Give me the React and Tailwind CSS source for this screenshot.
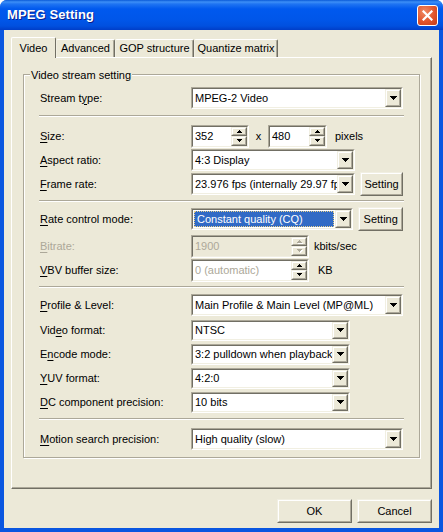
import React from 'react';

// tiny pixel arrows, drawn on a 1px grid so they stay crisp
const DropArrow = () => (
  <svg width="7" height="4" viewBox="0 0 7 4" shapeRendering="crispEdges">
    <path fill="#000" d="M0 0h7v1H6v1H5v1H4v1H3V3H2V2H1V1H0z" />
  </svg>
);

const SpinUp = ({ color = '#000' }) => (
  <svg width="5" height="3" viewBox="0 0 5 3" shapeRendering="crispEdges">
    <path fill={color} d="M2 0h1v1h1v1h1v1H0V2h1V1h1z" />
  </svg>
);

const SpinDown = ({ color = '#000' }) => (
  <svg width="5" height="3" viewBox="0 0 5 3" shapeRendering="crispEdges">
    <path fill={color} d="M0 0h5v1H4v1H3v1H2V2H1V1H0z" />
  </svg>
);

function Raised({ className = '', children }) {
  return (
    <div className={`flex border border-[#f1efe2] border-b-[#716f64] border-r-[#716f64] ${className}`}>
      <div className="flex-1 flex items-center justify-center border border-white border-b-[#aca899] border-r-[#aca899] bg-[#ece9d8]">
        {children}
      </div>
    </div>
  );
}

function Sunken({ className = '', inner = 'bg-white', children }) {
  return (
    <div className={`flex border border-[#aca899] border-b-white border-r-white ${className}`}>
      <div className={`flex-1 flex min-w-0 border border-[#716f64] border-b-[#f1efe2] border-r-[#f1efe2] ${inner}`}>
        {children}
      </div>
    </div>
  );
}

function Combo({ w, h = 'h-[22px]', value, selected }) {
  return (
    <Sunken className={`${w} ${h}`}>
      {selected ? (
        <div className="flex-1 min-w-0 flex items-center m-px pl-[2px] bg-[#316ac5] text-white whitespace-nowrap overflow-hidden border border-dotted border-[#e8d08a]">
          {value}
        </div>
      ) : (
        <div className="flex-1 min-w-0 flex items-center pl-[2px] whitespace-nowrap overflow-hidden">{value}</div>
      )}
      <Raised className="w-[16px]"><DropArrow /></Raised>
    </Sunken>
  );
}

function Spin({ w, value, disabled, dimText }) {
  const arrow = disabled ? '#aca899' : '#000';
  return (
    <Sunken className={`${w} h-[23px]`} inner={disabled ? 'bg-[#ece9d8]' : 'bg-white'}>
      <div className={`flex-1 min-w-0 flex items-center pl-[2px] whitespace-nowrap ${disabled || dimText ? 'text-[#aca899]' : ''}`}>
        {value}
      </div>
      <div className="w-[16px] flex flex-col">
        <Raised className="flex-1">
          <span className={disabled ? 'flex drop-shadow-[1px_1px_0_#fff]' : 'flex'}><SpinUp color={arrow} /></span>
        </Raised>
        <Raised className="flex-1">
          <span className={disabled ? 'flex drop-shadow-[1px_1px_0_#fff]' : 'flex'}><SpinDown color={arrow} /></span>
        </Raised>
      </div>
    </Sunken>
  );
}

function Btn({ w, h = 'h-[24px]', children }) {
  return <Raised className={`${w} ${h}`}>{children}</Raised>;
}

// label with underlined access key
function Lbl({ pre = '', u, post = '', disabled }) {
  return (
    <div className={`w-[151px] shrink-0 whitespace-nowrap ${disabled ? 'text-[#aca899]' : ''}`}>
      {pre}<span className="underline underline-offset-[2px]">{u}</span>{post}
    </div>
  );
}

function Row({ className = '', children }) {
  return <div className={`flex items-center h-[24px] ${className}`}>{children}</div>;
}

const Sep = ({ className = '' }) => (
  <div className={`border-t border-[#aca899] border-b border-b-white ${className}`} />
);

const TABS = [
  { label: 'Video', w: 'w-[45px]', active: true },
  { label: 'Advanced', w: 'w-[59px]' },
  { label: 'GOP structure', w: 'w-[79px]' },
  { label: 'Quantize matrix', w: 'w-[84px]' },
];

export default function App() {
  return (
    <div className="w-[443px] h-[532px] flex flex-col rounded-t-[7px] overflow-hidden bg-[#0a56e0] font-['Liberation_Sans',Arial,sans-serif] text-[11px] text-black">

      {/* Title bar */}
      <div className="h-[30px] shrink-0 flex items-center pl-[7px] pr-[5px] bg-[linear-gradient(to_bottom,#0a5ad8_0px,#3d8ff7_2px,#1f74f2_4px,#0059ee_9px,#0056e9_20px,#0050df_26px,#003ec8_30px)]">
        <span className="text-white font-bold text-[13px] tracking-[0.1px] [text-shadow:1px_1px_0_#0a1e8a]">MPEG Setting</span>
        <div className="ml-auto w-[21px] h-[21px] rounded-[3px] border border-white flex items-center justify-center bg-[radial-gradient(circle_at_35%_30%,#f08a63,#e0542c_55%,#c23b18)]">
          <svg width="11" height="11" viewBox="0 0 11 11">
            <path d="M1.5 1.5l8 8M9.5 1.5l-8 8" stroke="#fff" strokeWidth="2.2" strokeLinecap="square" />
          </svg>
        </div>
      </div>

      {/* Client area */}
      <div className="flex-1 mx-[4px] mb-[4px] bg-[#ece9d8] px-[7px] pt-[7px] pb-[5px] flex flex-col">

        {/* Tabs */}
        <div className="h-[20px] flex items-end">
          {TABS.map(t => t.active ? (
            <div key={t.label}
              className={`${t.w} h-[21px] -mb-px relative z-10 flex items-center justify-center rounded-t-[2px] border border-b-0 border-white border-r-[#716f64] bg-[#ece9d8]`}>
              {t.label}
            </div>
          ) : (
            <div key={t.label}
              className={`${t.w} h-[18px] flex items-center justify-center rounded-t-[2px] border border-b-0 border-white border-r-[#716f64] border-l-[#f1efe2] shadow-[inset_-1px_0_0_#aca899]`}>
              {t.label}
            </div>
          ))}
        </div>

        {/* Tab page */}
        <div className="h-[432px] border border-white border-b-[#716f64] border-r-[#716f64] shadow-[inset_-1px_-1px_0_#aca899]">
          <div className="relative mt-[16px] mx-[11px] border border-[#aca899] shadow-[inset_1px_1px_0_#fff,1px_1px_0_#fff] pt-[11px] pb-[6px] px-[16px]">
            <span className="absolute -top-[8px] left-[6px] px-[1px] bg-[#ece9d8]">Video stream setting</span>

            <Row>
              <Lbl pre="Stream t" u="y" post="pe:" />
              <Combo w="w-[212px]" value="MPEG-2 Video" />
            </Row>

            <Sep className="mt-[5px] -mx-px" />

            <Row className="mt-[7px]">
              <Lbl u="S" post="ize:" />
              <Spin w="w-[58px]" value="352" />
              <span className="w-[19px] text-center">x</span>
              <Spin w="w-[59px]" value="480" />
              <span className="ml-[8px]">pixels</span>
            </Row>
            <Row>
              <Lbl u="A" post="spect ratio:" />
              <Combo w="w-[164px]" value="4:3 Display" />
            </Row>
            <Row>
              <Lbl u="F" post="rame rate:" />
              <Combo w="w-[164px]" value="23.976 fps (internally 29.97 fps)" />
              <Btn w="w-[45px] ml-[5px]">Setting</Btn>
            </Row>

            <Sep className="mt-[4px] -mx-px" />

            <Row className="mt-[5px]">
              <Lbl u="R" post="ate control mode:" />
              <Combo w="w-[164px]" value="Constant quality (CQ)" selected />
              <Btn w="w-[45px] ml-[5px]">Setting</Btn>
            </Row>
            <Row className="mt-[3px]">
              <Lbl u="B" post="itrate:" disabled />
              <Spin w="w-[118px]" value="1900" disabled />
              <span className="ml-[5px]">kbits/sec</span>
            </Row>
            <Row>
              <Lbl u="V" post="BV buffer size:" />
              <Spin w="w-[118px]" value="0 (automatic)" dimText />
              <span className="ml-[9px]">KB</span>
            </Row>

            <Sep className="mt-[4px] -mx-px" />

            <Row className="mt-[5px]">
              <Lbl u="P" post="rofile & Level:" />
              <Combo w="w-[212px]" value="Main Profile & Main Level (MP@ML)" />
            </Row>
            <Row className="mt-px">
              <Lbl pre="Vid" u="e" post="o format:" />
              <Combo w="w-[159px]" h="h-[21px]" value="NTSC" />
            </Row>
            <Row>
              <Lbl pre="E" u="n" post="code mode:" />
              <Combo w="w-[159px]" h="h-[21px]" value="3:2 pulldown when playback" />
            </Row>
            <Row>
              <Lbl u="Y" post="UV format:" />
              <Combo w="w-[159px]" h="h-[21px]" value="4:2:0" />
            </Row>
            <Row>
              <Lbl u="D" post="C component precision:" />
              <Combo w="w-[159px]" h="h-[21px]" value="10 bits" />
            </Row>

            <Sep className="mt-[4px] -mx-px" />

            <Row className="mt-[7px]">
              <Lbl u="M" post="otion search precision:" />
              <Combo w="w-[212px]" value="High quality (slow)" />
            </Row>
          </div>
        </div>

        {/* Dialog buttons */}
        <div className="mt-[10px] flex justify-end gap-[5px]">
          <Btn w="w-[75px]">OK</Btn>
          <Btn w="w-[75px]">Cancel</Btn>
        </div>
      </div>
    </div>
  );
}
